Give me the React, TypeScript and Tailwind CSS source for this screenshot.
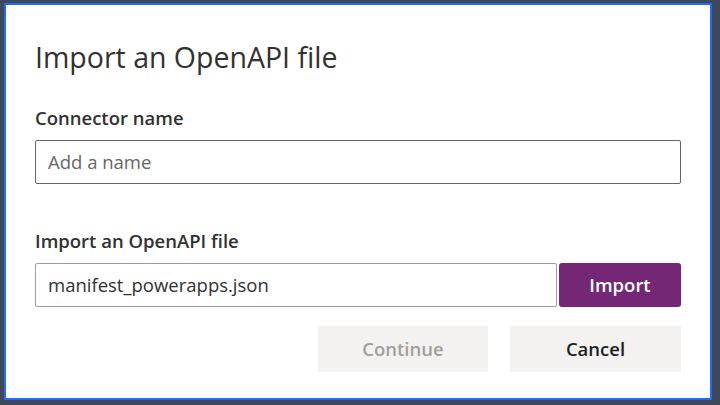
export default function App() {
  const font = { fontFamily: '"Segoe UI", "Open Sans", "Noto Sans", sans-serif' };
  return (
    <div className="w-[720px] h-[405px] bg-[#3f4858] pt-[3px] pl-[4px] pr-[8px] pb-[5px]" style={font}>
      <div className="w-full h-full border-2 border-[#1f6bff] bg-white px-[29px] flex flex-col">
        <div className="mt-[33px] text-[28.5px] leading-[38px] text-[#323130]">Import an OpenAPI file</div>
        <div className="mt-[30px] text-[18.5px] leading-[24px] font-semibold text-[#323130]">Connector name</div>
        <div className="mt-[10px] h-[44px] border border-[#666] rounded-[2px] flex items-center px-[12px] text-[18.5px] text-[#666]">
          Add a name
        </div>
        <div className="mt-[45px] text-[18.5px] leading-[24px] font-semibold text-[#323130]">Import an OpenAPI file</div>
        <div className="mt-[10px] flex gap-[2px]">
          <div className="flex-1 h-[44px] border border-[#a19f9d] rounded-[2px] flex items-center px-[12px] text-[18.5px] text-[#323130]">
            manifest_powerapps.json
          </div>
          <div className="w-[122px] h-[44px] bg-[#742774] rounded-[3px] flex items-center justify-center text-white text-[18.5px] font-semibold">
            Import
          </div>
        </div>
        <div className="mt-[19px] flex justify-end gap-[22px]">
          <div className="w-[170px] h-[46px] bg-[#f3f2f1] flex items-center justify-center text-[18.5px] font-semibold text-[#a19f9d]">
            Continue
          </div>
          <div className="w-[171px] h-[46px] bg-[#f3f2f1] flex items-center justify-center text-[18.5px] font-semibold text-[#201f1e]">
            Cancel
          </div>
        </div>
      </div>
    </div>
  );
}
